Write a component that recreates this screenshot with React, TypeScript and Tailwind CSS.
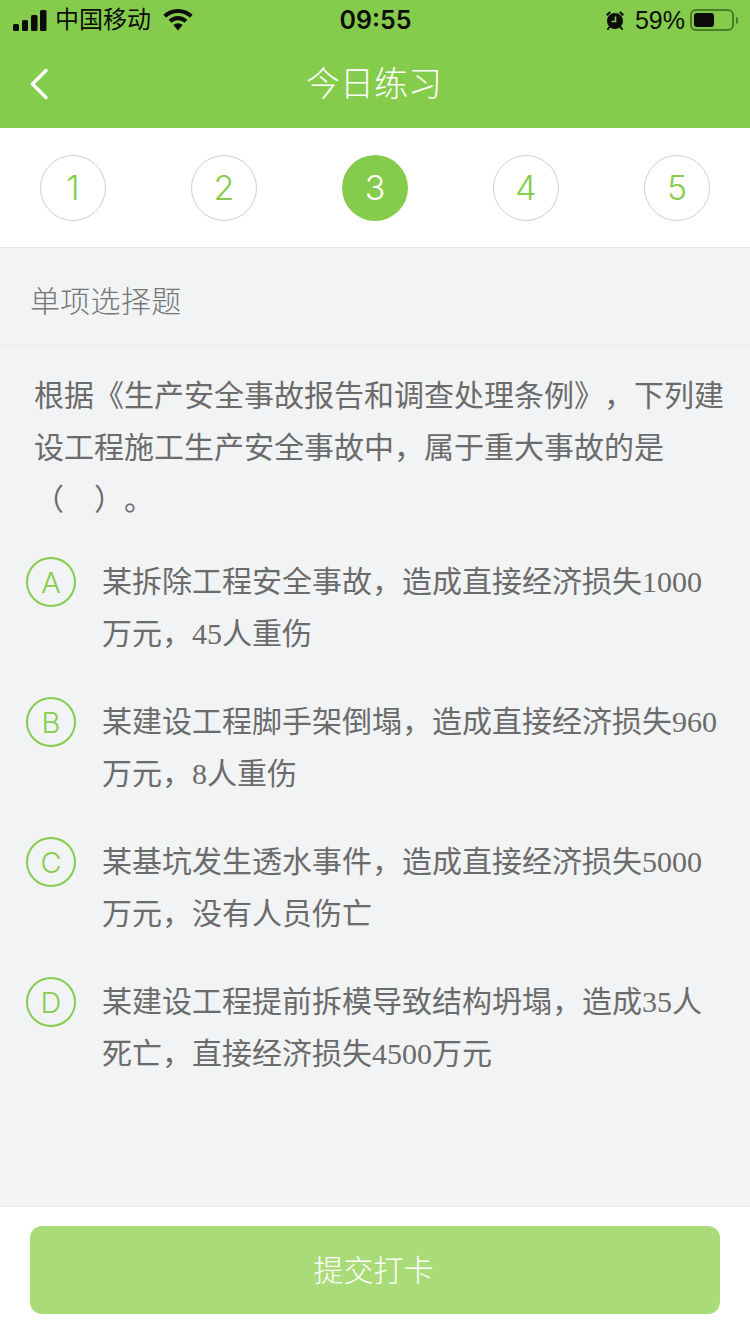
const SANS = "font-['Liberation_Sans','Noto_Sans_CJK_SC',sans-serif]";

const STEPS = [1, 2, 3, 4, 5];
const CURRENT = 3;

const OPTIONS = [
  { key: 'A', text: '某拆除工程安全事故，造成直接经济损失1000万元，45人重伤' },
  { key: 'B', text: '某建设工程脚手架倒塌，造成直接经济损失960万元，8人重伤' },
  { key: 'C', text: '某基坑发生透水事件，造成直接经济损失5000万元，没有人员伤亡' },
  { key: 'D', text: '某建设工程提前拆模导致结构坍塌，造成35人死亡，直接经济损失4500万元' },
];

const Signal = () => (
  <svg width="34" height="21" viewBox="0 0 34 21" fill="#0c0c0c">
    <rect x="0" y="14" width="6" height="7" rx="1.5" />
    <rect x="9" y="10" width="6" height="11" rx="1.5" />
    <rect x="18" y="5" width="6.500" height="16" rx="1.5" />
    <rect x="27" y="0" width="6.500" height="21" rx="1.5" />
  </svg>
);

const Wifi = () => (
  <svg width="30" height="22" viewBox="0 0 30 22" fill="#0c0c0c">
    <path d="M15 0C9.300 0 4.200 2.200.4 5.800l2.700 3C6.200 5.800 10.400 4 15 4s8.800 1.800 11.900 4.800l2.700-3C25.800 2.200 20.700 0 15 0z" />
    <path d="M15 7C11.400 7 8.100 8.400 5.600 10.800l2.900 3C10.200 12.200 12.500 11.200 15 11.200s4.800 1 6.500 2.600l2.900-3C21.900 8.400 18.600 7 15 7z" />
    <path d="M15 14.300c-1.800 0-3.400.7-4.600 1.800L15 21.500l4.600-5.400c-1.200-1.100-2.800-1.800-4.600-1.800z" />
  </svg>
);

const Alarm = () => (
  <svg width="20" height="20" viewBox="0 0 20 20">
    <circle cx="10" cy="11" r="8" fill="#0c0c0c" />
    <path d="M1 4.500 4.500 1.200 6 2.600 2.400 6zM19 4.500 15.500 1.200 14 2.600 17.600 6z" fill="#0c0c0c" />
    <path d="M4.500 17 2.800 19.300M15.500 17l1.700 2.300" stroke="#0c0c0c" strokeWidth="1.800" strokeLinecap="round" />
    <path d="M10.500 6.500v5H6.500" stroke="#86cc4c" strokeWidth="1.500" fill="none" />
  </svg>
);

const Battery = () => (
  <div className="flex items-center">
    <div className="w-[44px] h-[22px] rounded-[6px] border-2 border-[#4d7d2a] p-[2px]">
      <div className="h-full w-[56%] rounded-[3px] bg-[#0c0c0c]" />
    </div>
    <div className="ml-[2px] w-[2px] h-[7px] rounded-r-sm bg-[#4d7d2a]" />
  </div>
);

const ChevronBack = () => (
  <svg width="20" height="32" viewBox="0 0 20 32" fill="none">
    <path d="M17 2.500 3.500 16 17 29.500" stroke="#ffffff" strokeWidth="3.500" strokeLinecap="round" strokeLinejoin="round" />
  </svg>
);

export default function App() {
  return (
    <div className={`${SANS} w-[750px] h-[1334px] flex flex-col bg-[#f2f3f5] overflow-hidden [text-spacing-trim:space-all]`}>
      <div className="bg-[#86cc4c] h-[128px] shrink-0">
        <div className="h-[40px] pl-[13px] pr-[12px] flex items-center justify-between text-[#0c0c0c]">
          <div className="flex-1 flex items-center">
            <Signal />
            <span className="ml-[8px] text-[24px] leading-none">中国移动</span>
            <span className="ml-[12px]"><Wifi /></span>
          </div>
          <span className="font-['Inter',sans-serif] text-[25px] font-semibold leading-none">09:55</span>
          <div className="flex-1 flex items-center justify-end">
            <Alarm />
            <span className="ml-[10px] mr-[5px] text-[25px] leading-none">59%</span>
            <Battery />
          </div>
        </div>
        <div className="h-[88px] px-[29px] flex items-center">
          <div className="w-[60px]"><ChevronBack /></div>
          <div className="flex-1 text-center text-white text-[34px] font-light leading-none pr-[62px]">今日练习</div>
        </div>
      </div>

      <div className="h-[120px] shrink-0 bg-white border-b border-[#e8e9ec] px-[40px] flex items-center justify-between font-['Inter',sans-serif] font-[350]">
        {STEPS.map(n => (
          <div
            key={n}
            className={
              n === CURRENT
                ? 'w-[66px] h-[66px] rounded-full bg-[#86cc4c] text-white text-[34px] flex items-center justify-center'
                : 'w-[66px] h-[66px] rounded-full border border-[#cfcfcf] text-[#86cc4c] text-[34px] flex items-center justify-center'
            }
          >
            {n}
          </div>
        ))}
      </div>

      <div className="h-[98px] shrink-0 border-b border-[#e8e9ec] pl-[30px] pt-[10px] flex items-center text-[30px] tracking-[0.3px] text-[#777777] font-light">
        单项选择题
      </div>

      <div className="flex-1 font-['Liberation_Serif','Noto_Sans_CJK_SC',serif] text-[30px] leading-[52px] text-[#6b6b6b]">
        <div className="pt-[24px] pl-[34px] pr-[20px]">
          根据《生产安全事故报告和调查处理条例》，下列建设工程施工生产安全事故中，属于重大事故的是<span className="whitespace-nowrap">（　）。</span>
        </div>
        <div className="mt-[30px] pl-[27px] pr-[25px] flex flex-col gap-[36px]">
          {OPTIONS.map(opt => (
            <div key={opt.key} className="flex items-start">
              <div className="font-['Inter',sans-serif] shrink-0 w-[50px] h-[50px] mt-[1px] -ml-[1px] rounded-full border-2 border-[#86cc4c] text-[#86cc4c] text-[29px] font-[350] leading-none flex items-center justify-center">
                {opt.key}
              </div>
              <div className="ml-[26px] min-w-0">{opt.text}</div>
            </div>
          ))}
        </div>
      </div>

      <div className="h-[128px] shrink-0 bg-white border-t border-[#e8e9ec] pt-[19px] px-[30px]">
        <button className="w-full h-[88px] pr-[3px] rounded-[12px] bg-[#a9dc78] text-white text-[30px] font-light flex items-center justify-center">
          提交打卡
        </button>
      </div>
    </div>
  );
}
